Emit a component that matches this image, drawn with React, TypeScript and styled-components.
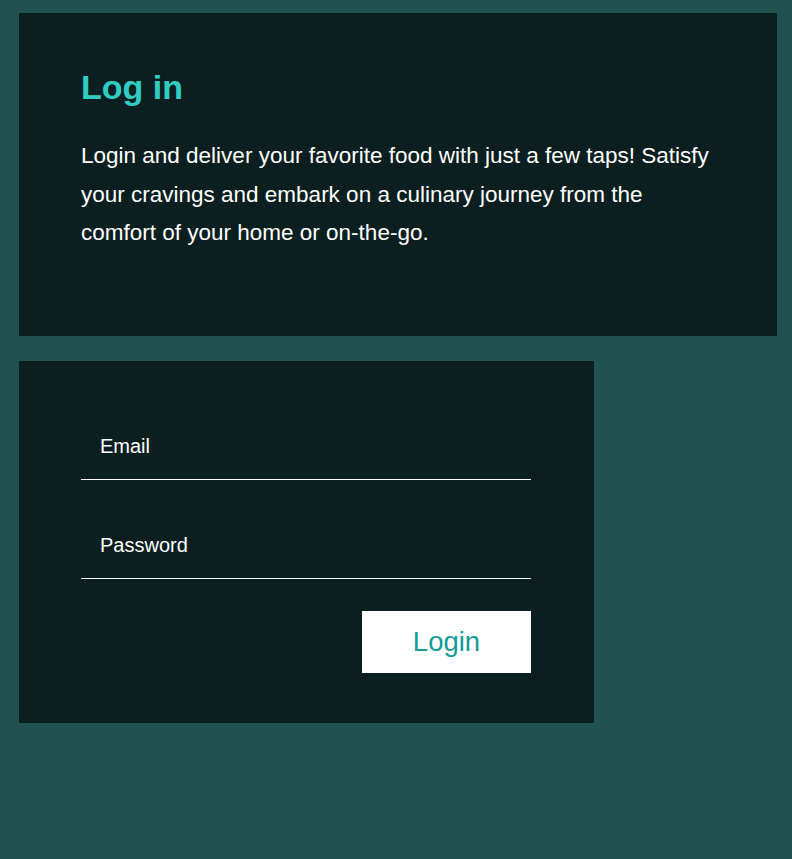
import React from "react";
import styled, { createGlobalStyle } from "styled-components";

const Global = createGlobalStyle`
  html, body { margin: 0; padding: 0; background: #1f5251; }
  body { font-family: "Liberation Sans", Arial, sans-serif; }
  * { box-sizing: border-box; }
`;

const Page = styled.main`
  min-height: 859px;
  background: #1f5251;
  padding: 13px 15px 0 19px;
  display: flex;
  flex-direction: column;
  align-items: flex-start;
  gap: 25px;
`;

const IntroCard = styled.section`
  width: 758px;
  height: 323px;
  background: #0c1f20;
  padding: 55px 62px 0;
`;

const Title = styled.h1`
  margin: 0 0 31px;
  font-size: 34px;
  line-height: 38px;
  font-weight: 700;
  color: #30cdc4;
`;

const Lead = styled.p`
  margin: 0;
  font-size: 22.5px;
  line-height: 38.5px;
  color: #ffffff;
`;

const FormCard = styled.form`
  width: 575px;
  background: #0c1f20;
  padding: 51px 63px 50px 62px;
  display: flex;
  flex-direction: column;
  gap: 31px;
`;

const Field = styled.input`
  display: block;
  width: 100%;
  height: 68px;
  padding: 23px 19px 22px;
  background: transparent;
  border: none;
  border-bottom: 1px solid #ffffff;
  outline: none;
  color: #ffffff;
  font-family: "Liberation Sans", Arial, sans-serif;
  font-size: 20px;
  &::placeholder { color: #ffffff; opacity: 1; }
`;

const Actions = styled.div`
  display: flex;
  justify-content: flex-end;
  margin-top: 1px;
`;

const Button = styled.button`
  width: 169px;
  height: 62px;
  border: none;
  background: #ffffff;
  color: #119c97;
  font-family: "Liberation Sans", Arial, sans-serif;
  font-size: 27.5px;
  cursor: pointer;
`;

export default function App() {
  return (
    <>
      <Global />
      <Page>
        <IntroCard>
          <Title>Log in</Title>
          <Lead>
            Login and deliver your favorite food with just a few taps! Satisfy your cravings and
            embark on a culinary journey from the comfort of your home or on-the-go.
          </Lead>
        </IntroCard>
        <FormCard onSubmit={(e) => e.preventDefault()}>
          <Field type="email" placeholder="Email" />
          <Field type="password" placeholder="Password" />
          <Actions>
            <Button type="submit">Login</Button>
          </Actions>
        </FormCard>
      </Page>
    </>
  );
}
